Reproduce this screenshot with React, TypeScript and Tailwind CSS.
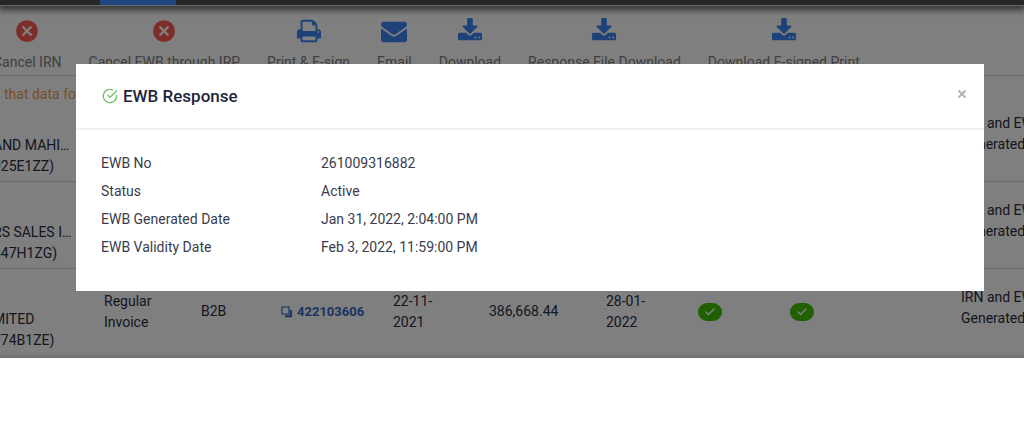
import { Check, X } from "lucide-react";
import { FiCheckCircle } from "react-icons/fi";

const glyphs = {
  print:
    "M448 1536h896v-256h-896v256zm0-640h896v-384h-160q-40 0-68-28t-28-68v-160h-640v640zm1152 64q0-26-19-45t-45-19-45 19-19 45 19 45 45 19 45-19 19-45zm128 0v416q0 13-9.5 22.5t-22.5 9.5h-224v160q0 40-28 68t-68 28h-960q-40 0-68-28t-28-68v-160h-224q-13 0-22.5-9.5t-9.5-22.5v-416q0-79 56.5-135.5t135.5-56.5h64v-544q0-40 28-68t68-28h672q40 0 88 20t76 48l152 152q28 28 48 76t20 88v256h64q79 0 135.5 56.5t56.5 135.5z",
  email:
    "M1792 710v794q0 66-47 113t-113 47h-1472q-66 0-113-47t-47-113v-794q44 49 101 87 362 246 497 345 57 42 92.5 65.5t94.5 48 110 24.5h2q51 0 110-24.5t94.5-48 92.5-65.5q170-123 498-345 57-39 100-87zm0-294q0 79-49 151t-122 123q-376 261-468 325-10 7-42.5 31t-54 38.8-52 32.5-57.5 27-50 9h-2q-23 0-50-9t-57.5-27-52-32.5-54-38.8-42.5-31q-91-64-262-182.5t-205-142.5q-62-42-117-115.5t-55-136.5q0-78 41.5-130t118.5-52h1472q65 0 112.5 47t47.5 113z",
  download:
    "M1344 1344q0-26-19-45t-45-19-45 19-19 45 19 45 45 19 45-19 19-45zm256 0q0-26-19-45t-45-19-45 19-19 45 19 45 45 19 45-19 19-45zm128-224v320q0 40-28 68t-68 28h-1472q-40 0-68-28t-28-68v-320q0-40 28-68t68-28h465l135 136q58 56 136 56t136-56l136-136h464q40 0 68 28t28 68zm-325-569q17 41-14 70l-448 448q-18 19-45 19t-45-19l-448-448q-31-29-14-70 17-39 59-39h256v-448q0-26 19-45t45-19h256q26 0 45 19t19 45v448h256q42 0 59 39z",
};

type Glyph = keyof typeof glyphs | "cancel";

const actions: { label: string; icon: Glyph }[] = [
  { label: "Cancel IRN", icon: "cancel" },
  { label: "Cancel EWB through IRP", icon: "cancel" },
  { label: "Print & E-sign", icon: "print" },
  { label: "Email", icon: "email" },
  { label: "Download", icon: "download" },
  { label: "Response File Download", icon: "download" },
  { label: "Download E-signed Print", icon: "download" },
];

const rows = [
  { buyer: ["AND MAHI…", "025E1ZZ)"] },
  { buyer: ["RS SALES I…", "847H1ZG)"] },
  {
    buyer: ["MITED", "774B1ZE)"],
    invoice: {
      type: "Regular Invoice",
      supply: "B2B",
      number: "422103606",
      date: ["22-11-", "2021"],
      amount: "386,668.44",
      irnDate: ["28-01-", "2022"],
    },
  },
];

const details = [
  { label: "EWB No", value: "261009316882" },
  { label: "Status", value: "Active" },
  { label: "EWB Generated Date", value: "Jan 31, 2022, 2:04:00 PM" },
  { label: "EWB Validity Date", value: "Feb 3, 2022, 11:59:00 PM" },
];

function ActionIcon({ icon }: { icon: Glyph }) {
  if (icon === "cancel") {
    return (
      <svg viewBox="0 0 26 26" className="size-[26px]" aria-hidden="true">
        <circle cx="13" cy="13" r="10.8" fill="#ff5a50" />
        <path d="M8.5 8.5l9 9M17.5 8.5l-9 9" stroke="#fff" strokeWidth="2.4" />
      </svg>
    );
  }
  return (
    <svg viewBox="0 0 1792 1792" className="size-[26px] fill-[#3b84f4]" aria-hidden="true">
      <path d={glyphs[icon]} />
    </svg>
  );
}

function CopyIcon() {
  return (
    <svg viewBox="0 0 12 12" className="size-3" fill="none" stroke="currentColor" aria-hidden="true">
      <path d="M1 1h7v7H1z" strokeWidth="1.2" />
      <path d="M10 4v6.2H4" strokeWidth="2" />
    </svg>
  );
}

function DonePill() {
  return (
    <span className="flex h-[18px] w-6 items-center justify-center rounded-full bg-[#40c000] text-white">
      <Check className="size-3" strokeWidth={3} />
    </span>
  );
}

function Toolbar() {
  return (
    <div className="-ml-[7px] flex h-[71px] gap-[27px] border-b border-[#d8d8d8] pt-[13px]">
      {actions.map((action) => (
        <button
          key={action.label}
          className="flex shrink-0 flex-col items-center gap-2 whitespace-nowrap text-[#808080]"
        >
          <ActionIcon icon={action.icon} />
          <span>{action.label}</span>
        </button>
      ))}
    </div>
  );
}

function InvoiceTable() {
  return (
    <table className="w-full table-fixed border-collapse text-left leading-[21px] text-[#2b2d40]">
      <colgroup>
        <col className="w-24" />
        <col className="w-[97px]" />
        <col className="w-20" />
        <col className="w-28" />
        <col className="w-24" />
        <col className="w-[117px]" />
        <col className="w-[92px]" />
        <col className="w-[92px]" />
        <col className="w-[171px]" />
        <col />
      </colgroup>
      <tbody>
        {rows.map(({ buyer, invoice }, i) => (
          <tr key={i} className="h-[87px] border-b border-[#d8d8d8] first:h-[77px]">
            <td className="whitespace-nowrap pb-1 align-bottom">
              <div className="-ml-[7px]">
                {buyer[0]}
                <br />
                {buyer[1]}
              </div>
            </td>
            {invoice ? (
              <>
                <td className="px-2">{invoice.type}</td>
                <td className="px-2">{invoice.supply}</td>
                <td className="px-2">
                  <a href="#invoice" className="flex items-center gap-1 text-[13px] font-bold text-[#2f68c4]">
                    <CopyIcon />
                    {invoice.number}
                  </a>
                </td>
                <td className="px-2">
                  {invoice.date[0]}
                  <br />
                  {invoice.date[1]}
                </td>
                <td className="px-2">{invoice.amount}</td>
                <td className="px-2">
                  {invoice.irnDate[0]}
                  <br />
                  {invoice.irnDate[1]}
                </td>
                <td className="px-2">
                  <DonePill />
                </td>
                <td className="px-2">
                  <DonePill />
                </td>
              </>
            ) : (
              <td colSpan={8} />
            )}
            <td className="whitespace-nowrap px-2 pb-[26px] align-bottom">
              IRN and EWB
              <br />
              Generated
            </td>
          </tr>
        ))}
      </tbody>
    </table>
  );
}

function ResponseDialog() {
  return (
    <div role="dialog" aria-labelledby="dialog-title" className="bg-white text-[#3a3c4e]">
      <header className="flex h-[66px] items-center border-b-2 border-[#f0f0f6] pl-[26px] pr-4">
        <FiCheckCircle className="size-4 text-[#72c168]" />
        <h2 id="dialog-title" className="ml-[5px] text-[17px] font-medium text-[#23253a]">
          EWB Response
        </h2>
        <button aria-label="Close" className="mb-1 ml-auto text-[#b4b4b4]">
          <X className="size-3" strokeWidth={4} />
        </button>
      </header>
      <dl className="flex flex-col gap-2 px-[25px] pb-[34px] pt-[23px] leading-5">
        {details.map((item) => (
          <div key={item.label} className="flex">
            <dt className="w-[220px] shrink-0">{item.label}</dt>
            <dd>{item.value}</dd>
          </div>
        ))}
      </dl>
    </div>
  );
}

export default function App() {
  return (
    <div className="relative overflow-hidden bg-white font-['Roboto',sans-serif] text-sm">
      <div className="h-[5px] bg-[#4c4c4c] pl-[100px] shadow-[0_1px_0_#d0d0d0,0_3px_6px_2px_rgba(0,0,0,0.6)]">
        <div className="h-full w-[76px] bg-[#3b8cff]" />
      </div>
      <Toolbar />
      <p className="pl-1 pt-2 leading-5 text-[#f2a044]">that data for</p>
      <InvoiceTable />
      <div className="h-[2px] border-b border-[#ddd] bg-[#f4f4f4]" />
      <div className="absolute inset-0 bg-black/50 pl-[76px] pr-10 pt-16">
        <ResponseDialog />
      </div>
    </div>
  );
}
